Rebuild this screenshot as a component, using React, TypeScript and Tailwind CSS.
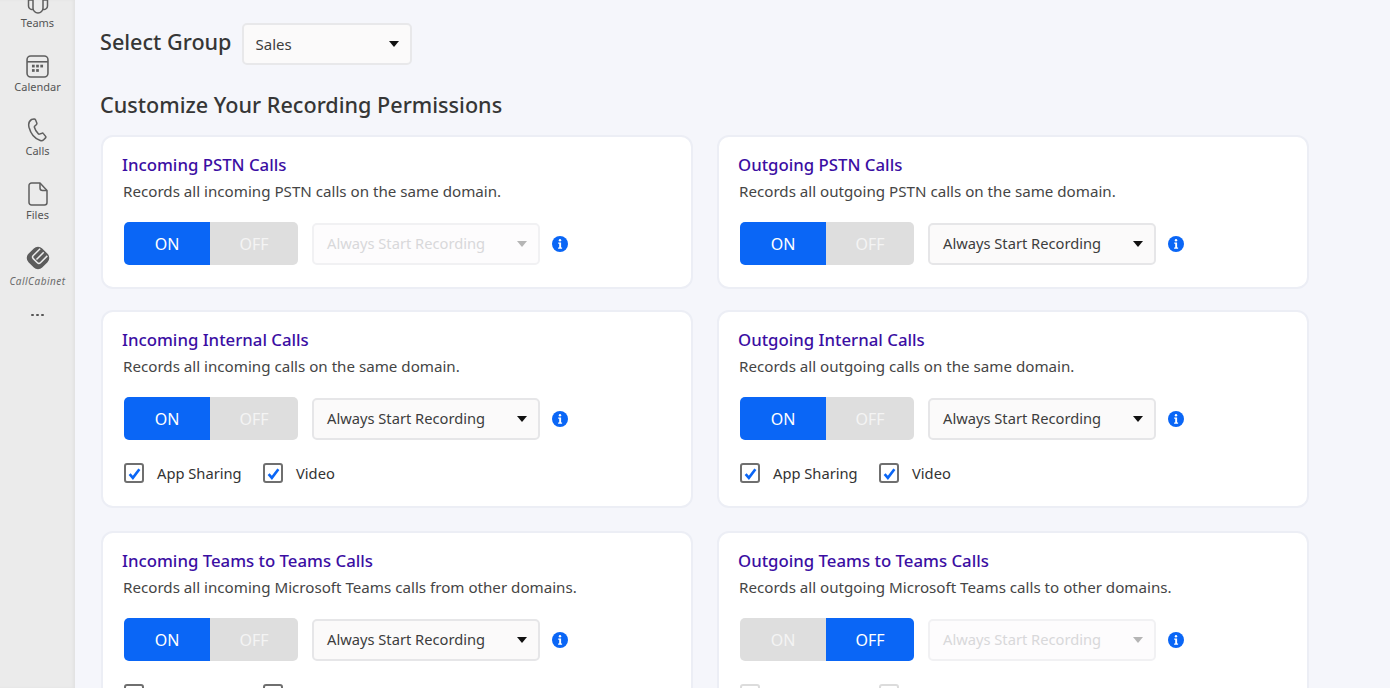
import type { ReactNode } from 'react'

type Permission = {
    title: string
    desc: string
    on: boolean
    selectOff?: boolean
    options?: boolean
    lastRow?: boolean
}

const permissions: Permission[] = [
    { title: 'Incoming PSTN Calls', desc: 'Records all incoming PSTN calls on the same domain.', on: true, selectOff: true },
    { title: 'Outgoing PSTN Calls', desc: 'Records all outgoing PSTN calls on the same domain.', on: true },
    { title: 'Incoming Internal Calls', desc: 'Records all incoming calls on the same domain.', on: true, options: true },
    { title: 'Outgoing Internal Calls', desc: 'Records all outgoing calls on the same domain.', on: true, options: true },
    { title: 'Incoming Teams to Teams Calls', desc: 'Records all incoming Microsoft Teams calls from other domains.', on: true, options: true, lastRow: true },
    { title: 'Outgoing Teams to Teams Calls', desc: 'Records all outgoing Microsoft Teams calls to other domains.', on: false, selectOff: true, options: true, lastRow: true },
]

function TeamsIcon() {
    return (
        <svg width="24" height="24" viewBox="0 0 24 24" fill="none" stroke="#5f5f5f" strokeWidth="1.500">
            <path d="M7 9h10v9a5 5 0 0 1-10 0z" />
            <path d="M17 10h4.500v6a3.500 3.500 0 0 1-4.500 3.300M7 10H2.500v6A3.500 3.500 0 0 0 7 19.300" />
        </svg>
    )
}

function CalendarIcon() {
    return (
        <svg width="23" height="23" viewBox="0 0 22 22" fill="none">
            <rect x="1" y="1" width="20" height="20" rx="3.500" stroke="#5f5f5f" strokeWidth="1.500" />
            <path d="M1 6.500h20" stroke="#5f5f5f" strokeWidth="1.500" />
            <g fill="#5f5f5f">
                <rect x="5.700" y="9.300" width="2.600" height="2.600" />
                <rect x="9.700" y="9.300" width="2.600" height="2.600" />
                <rect x="13.700" y="9.300" width="2.600" height="2.600" />
                <rect x="5.700" y="13.500" width="2.600" height="2.600" />
                <rect x="9.700" y="13.500" width="2.600" height="2.600" />
            </g>
        </svg>
    )
}

function PhoneIcon() {
    return (
        <svg width="22" height="24" viewBox="0 0 22 24" fill="none" stroke="#5f5f5f" strokeWidth="1.500" strokeLinejoin="round">
            <path d="M4.500 1.500 7 1c.7-.1 1.200.2 1.500.8l1.300 3.200c.2.600.1 1.100-.3 1.500L7.600 8.300c-.3.300-.3.600-.2 1 .7 2.600 2 4.800 4 6.600.3.300.6.300 1 .2l2.600-.9c.5-.2 1.100 0 1.400.4l2.200 2.800c.4.500.3 1.100-.1 1.500l-1.800 1.800c-.9.900-2.200 1.200-3.400.8C7.700 20.600 3.700 15.600 2 9.200 1.300 6.300 1.900 3.200 4.500 1.500z" />
        </svg>
    )
}

function FileIcon() {
    return (
        <svg width="20" height="24" viewBox="0 0 20 24" fill="none" stroke="#5f5f5f" strokeWidth="1.500" strokeLinejoin="round">
            <path d="M3.500 1h8.500l7 7.500v12a2.500 2.500 0 0 1-2.500 2.500h-13A2.500 2.500 0 0 1 1 20.500v-17A2.500 2.500 0 0 1 3.500 1z" />
            <path d="M12 1v5a2.500 2.500 0 0 0 2.500 2.500H19" />
        </svg>
    )
}

function CabinetLogo() {
    return (
        <svg width="28" height="28" viewBox="0 0 26 26">
            <g transform="rotate(-45 13 13)">
                <rect x="4" y="4" width="18" height="18" rx="5.500" fill="#5c5c5c" />
                <path d="M20.500 8.300h-9a2 2 0 0 0-2 2v5.400a2 2 0 0 0 2 2h9M11 13h9.500" stroke="#ebebeb" strokeWidth="1.400" fill="none" />
            </g>
        </svg>
    )
}

function RailItem({ icon, label, italic }: { icon: ReactNode; label: string; italic?: boolean }) {
    return (
        <div className="flex h-16 flex-col items-center">
            <div className={`flex items-end justify-center ${italic ? 'h-[29px]' : 'h-[27px]'}`}>{icon}</div>
            <span className={italic ? 'mt-[2px] text-[10px] leading-[14px] tracking-[0.5px] text-[#6b6b6b] italic' : 'mt-[2px] text-[11px] leading-[14px] text-[#555]'}>
                {label}
            </span>
        </div>
    )
}

function Caret({ color }: { color: string }) {
    return (
        <svg width="10" height="6" viewBox="0 0 10 6">
            <path d="M0 0h10L5 6z" fill={color} />
        </svg>
    )
}

function Dropdown({ value, disabled }: { value: string; disabled?: boolean }) {
    return (
        <div className={`flex h-[42px] w-[228px] items-center justify-between rounded-[5px] border-2 pr-[11px] pl-[13px] text-[14.700px] ${disabled ? 'border-[#f1f1f3] bg-[#fdfcfd] text-[#d8d8da]' : 'border-[#e6e6e8] bg-[#fbfafa] text-[#3d3d3d]'}`}>
            <span>{value}</span>
            <Caret color={disabled ? '#b5b5b5' : '#111'} />
        </div>
    )
}

function Toggle({ on }: { on: boolean }) {
    return (
        <div className="flex h-[43px] w-[174px] overflow-hidden rounded-[5px] text-[16px]">
            <div className={`flex w-[86px] items-center justify-center ${on ? 'bg-[#0a66f6] text-white' : 'bg-[#dedede] text-[#f4f4f4]'}`}>ON</div>
            <div className={`flex w-[88px] items-center justify-center ${on ? 'bg-[#dedede] text-[#f4f4f4]' : 'bg-[#0a66f6] text-white'}`}>OFF</div>
        </div>
    )
}

function InfoDot() {
    return (
        <svg width="16" height="16" viewBox="0 0 16 16">
            <circle cx="8" cy="8" r="8" fill="#0a66f6" />
            <circle cx="8" cy="4.300" r="1.200" fill="#fff" />
            <path d="M6.200 6.600h2.900v5h1v1.200H6.100v-1.200h1.100V7.800h-1z" fill="#fff" />
        </svg>
    )
}

function Check({ label, disabled, className }: { label: string; disabled: boolean; className: string }) {
    return (
        <div className={`flex h-5 items-center ${className}`}>
            <span className={`flex h-5 w-5 items-center justify-center rounded-[3px] border-2 ${disabled ? 'border-[#dcdcdc]' : 'border-[#6f6f6f]'}`}>
                {!disabled && (
                    <svg width="13" height="13" viewBox="0 0 12 12" fill="none">
                        <path d="M1.500 6.500 4.500 10 10.500 2" stroke="#0a66f6" strokeWidth="2.400" />
                    </svg>
                )}
            </span>
            <span className={`ml-[13px] text-[14.700px] leading-5 ${disabled ? 'text-[#d8d8da]' : 'text-[#333]'}`}>{label}</span>
        </div>
    )
}

function PermissionCard({ item }: { item: Permission }) {
    return (
        <div className={`rounded-xl border-2 border-[#eceef5] bg-white pt-4 pr-4 pl-[19px] ${item.options ? 'pb-[23px]' : 'pb-[22px]'} ${item.lastRow ? 'mt-[2px]' : ''}`}>
            <h3 className="text-[16.800px] leading-6 font-medium text-[#3b0ea3]">{item.title}</h3>
            <p className="mt-[3px] pl-px text-[15.150px] leading-[22px] text-[#454545]">{item.desc}</p>
            <div className="mt-5 flex items-center pl-[2px]">
                <Toggle on={item.on} />
                <div className="ml-[14px]">
                    <Dropdown value="Always Start Recording" disabled={item.selectOff} />
                </div>
                <div className="ml-3">
                    <InfoDot />
                </div>
            </div>
            {item.options && (
                <div className="mt-[23px] flex pl-[2px]">
                    <Check label="App Sharing" disabled={!item.on} className="w-[139px]" />
                    <Check label="Video" disabled={!item.on} className="w-20" />
                </div>
            )}
        </div>
    )
}

export default function App() {
    return (
        <div className="flex h-[688px] w-[1390px] overflow-hidden bg-[#f5f6fb] font-['Noto_Sans',sans-serif]">
            <aside className="w-[75px] shrink-0 bg-[#ebebeb] shadow-[inset_-2px_0_3px_rgba(0,0,0,0.04)]">
                <div className="-mt-[13px]">
                    <RailItem icon={<TeamsIcon />} label="Teams" />
                    <RailItem icon={<CalendarIcon />} label="Calendar" />
                    <RailItem icon={<PhoneIcon />} label="Calls" />
                    <RailItem icon={<FileIcon />} label="Files" />
                    <RailItem icon={<CabinetLogo />} label="CallCabinet" italic />
                </div>
                <div className="mt-[7px] flex justify-center gap-[2px]">
                    <span className="h-[2px] w-[3px] rounded-full bg-[#555]" />
                    <span className="h-[2px] w-[3px] rounded-full bg-[#555]" />
                    <span className="h-[2px] w-[3px] rounded-full bg-[#555]" />
                </div>
            </aside>
            <main className="min-w-0 flex-1 pt-[23px] pl-[25px]">
                <div className="flex items-center">
                    <h1 className="mb-1 text-[21.600px] leading-[38px] font-medium text-[#363636]">Select Group</h1>
                    <div className="ml-[10px] flex h-[42px] w-[170px] items-center justify-between rounded-[5px] border-2 border-[#e8e8ea] bg-[#fbfafa] pr-[11px] pl-3 text-[15px] text-[#3d3d3d]">
                        <span>Sales</span>
                        <Caret color="#111" />
                    </div>
                </div>
                <h2 className="mt-[22px] text-[21.600px] leading-[36px] font-medium text-[#363636]">Customize Your Recording Permissions</h2>
                <div className="mt-3 grid w-[1209px] grid-cols-[592px_592px] gap-x-6 gap-y-[21px] pl-px">
                    {permissions.map((item) => (
                        <PermissionCard key={item.title} item={item} />
                    ))}
                </div>
            </main>
        </div>
    )
}
